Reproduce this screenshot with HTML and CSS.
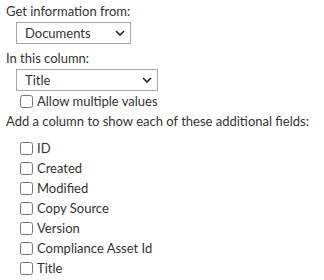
FILE: index.html
```html
<!DOCTYPE html>
<html>
<head>
<meta charset="utf-8">
<link rel="stylesheet" href="styles.css">
</head>
<body>
<div class="panel">
  <div class="label">Get information from:</div>
  <div class="indent">
    <span class="select-wrap w1">
      <select class="select"><option>Documents</option></select>
      <svg class="chev" width="10" height="6" viewBox="0 0 10 6"><path d="M1 1 L5 5 L9 1" fill="none" stroke="#222" stroke-width="1.6"/></svg>
    </span>
  </div>
  <div class="label gap">In this column:</div>
  <div class="indent">
    <span class="select-wrap w2">
      <select class="select"><option>Title</option></select>
      <svg class="chev" width="10" height="6" viewBox="0 0 10 6"><path d="M1 1 L5 5 L9 1" fill="none" stroke="#222" stroke-width="1.6"/></svg>
    </span>
  </div>
  <label class="check multi"><input type="checkbox"><span>Allow multiple values</span></label>
  <div class="label">Add a column to show each of these additional fields:</div>
  <div class="list">
    <label class="check"><input type="checkbox"><span>ID</span></label>
    <label class="check"><input type="checkbox"><span>Created</span></label>
    <label class="check"><input type="checkbox"><span>Modified</span></label>
    <label class="check"><input type="checkbox"><span>Copy Source</span></label>
    <label class="check"><input type="checkbox"><span>Version</span></label>
    <label class="check"><input type="checkbox"><span>Compliance Asset Id</span></label>
    <label class="check"><input type="checkbox"><span>Title</span></label>
  </div>
</div>
</body>
</html>
```
FILE: styles.css
```css
html, body {
  margin: 0;
  padding: 0;
  background: #fff;
}
.panel {
  padding: 0 0 0 6px;
  font-family: "Lato", "Noto Sans", sans-serif;
  font-size: 13px;
  color: #333;
  display: flex;
  flex-direction: column;
  white-space: nowrap;
}
.label {
  height: 18px;
  line-height: 18px;
  margin-top: 2px;
}
.label.gap {
  margin-top: 5px;
}
.indent {
  padding-left: 10px;
  margin-top: 2px;
  display: flex;
}
.select-wrap {
  position: relative;
  display: block;
}
.w1 { width: 115px; }
.w2 { width: 142px; }
.select {
  appearance: none;
  -webkit-appearance: none;
  width: 100%;
  height: 22px;
  box-sizing: border-box;
  border: 1px solid #a6a6a6;
  border-radius: 0;
  background: #fff;
  font-family: inherit;
  font-size: 13px;
  color: #333;
  padding: 0 0 0 8px;
  margin: 0;
  display: block;
}
.chev {
  position: absolute;
  right: 6px;
  top: 8px;
  pointer-events: none;
}
.check {
  display: flex;
  align-items: center;
  height: 20px;
}
.check input {
  margin: 0 4px 0 14px;
  width: 13px;
  height: 13px;
}
.multi {
  margin-top: 1px;
  height: 18px;
}
.list {
  margin-top: 8px;
  display: flex;
  flex-direction: column;
}
```
